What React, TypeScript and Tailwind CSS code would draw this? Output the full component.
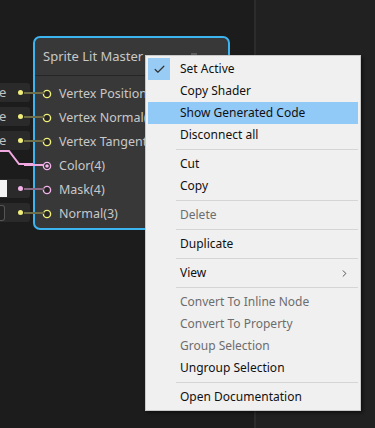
import { Check, ChevronRight } from "lucide-react";

type Item = { label: string; disabled?: boolean; checked?: boolean; active?: boolean; sub?: boolean } | "sep";

const menu: Item[] = [
  { label: "Set Active", checked: true },
  { label: "Copy Shader" },
  { label: "Show Generated Code", active: true },
  { label: "Disconnect all" },
  "sep",
  { label: "Cut" },
  { label: "Copy" },
  "sep",
  { label: "Delete", disabled: true },
  "sep",
  { label: "Duplicate" },
  "sep",
  { label: "View", sub: true },
  "sep",
  { label: "Convert To Inline Node", disabled: true },
  { label: "Convert To Property", disabled: true },
  { label: "Group Selection", disabled: true },
  { label: "Ungroup Selection" },
  "sep",
  { label: "Open Documentation" },
];

const slots = [
  { label: "Vertex Position", kind: "vec" },
  { label: "Vertex Normal(3)", kind: "vec" },
  { label: "Vertex Tangent(3)", kind: "vec" },
  { label: "Color(4)", kind: "color" },
  { label: "Mask(4)", kind: "mask" },
  { label: "Normal(3)", kind: "vec" },
];

function Port({ kind }: { kind: string }) {
  const c = kind === "vec" ? "#f2f07c" : "#f4b4ea";
  return (
    <svg width="10" height="10" viewBox="0 0 10 10" className="shrink-0">
      <circle cx="5" cy="5" r="3.6" fill="#262626" stroke={c} strokeWidth="1.4" />
      {kind === "color" && <circle cx="5" cy="5" r="1.8" fill={c} />}
    </svg>
  );
}

function Inputs() {
  // the input boxes that feed the master node, cut off by the left edge
  return (
    <div className="absolute left-0 top-[83px] w-[44px]">
      {slots.map((s, i) => {
        const dot = s.kind === "mask" ? "#f4b4ea" : "#f2f07c";
        const wire = s.kind === "color" || s.kind === "mask" ? "#8a6a84" : "#6f6d46";
        return (
          <div key={i} className="relative flex h-[24px] items-start">
            {s.kind !== "color" && (
              <div className="flex h-[19px] w-[30px] items-center rounded-r-[3px] bg-[#2a2a2a]">
                {s.kind === "vec" && i < 3 && (
                  <span className="ml-[-1px] text-[13px] leading-none text-[#c2c2c2]">e</span>
                )}
                {s.kind === "mask" && <div className="ml-0 h-[17px] w-[7px] bg-[#f4f4f4]" />}
                {i === 5 && <div className="h-[16px] w-[5px] rounded-r-[3px] border border-l-0 border-[#555] bg-[#222]" />}
              </div>
            )}
            {s.kind !== "color" && (
              <span className="absolute left-[18px] top-[7px] h-[5px] w-[5px] rounded-full" style={{ background: dot }} />
            )}
            <span className="absolute left-[24px] top-[8.5px] h-[2px] w-[20px]" style={{ background: s.kind === "color" ? "#f0a8e0" : wire }} />
          </div>
        );
      })}
    </div>
  );
}

export default function App() {
  return (
    <div className="relative h-[428px] w-[375px] overflow-hidden bg-[#1c1c1c] font-['Noto_Sans',sans-serif]">
      <div className="absolute inset-y-0 left-[254px] right-0 border-l-2 border-[#2c2c2c] bg-[#212121]" />

      {/* pink wire into Color(4) */}
      <svg className="absolute left-0 top-[145px]" width="46" height="30">
        <path d="M0 6 H9 L19 19 H44" fill="none" stroke="#f0a8e0" strokeWidth="2" />
      </svg>

      <div className="absolute left-[33px] top-[36px] h-[194px] w-[197px] rounded-[7px] border-2 border-[#3cb4ef] bg-[#383838]">
        <div className="flex h-[38px] items-center justify-between border-b border-[#262626] px-[8px]">
          <span className="text-[13px] text-[#c8c8c8]">Sprite Lit Master</span>
          <span className="mr-[23px] mt-[-2px] h-[5px] w-[6px] bg-[#5c5c5c]" />
        </div>
        <div className="flex flex-col pt-[6px]">
          {slots.map((s) => (
            <div key={s.label} className="flex h-[24px] items-center gap-[7px] pl-[7px]">
              <Port kind={s.kind} />
              <span className="whitespace-nowrap text-[12.5px] text-[#c8c8c8]">{s.label}</span>
            </div>
          ))}
        </div>
      </div>

      <Inputs />

      <div className="absolute left-[145px] top-[55px] w-[216px] border border-[#c9c9c9] bg-[#f0f0f0] py-[2px] shadow-[2px_2px_3px_rgba(0,0,0,0.45)]">
        {menu.map((m, i) =>
          m === "sep" ? (
            <div key={i} className="ml-[30px] mr-[2px] py-[3px]">
              <div className="h-px bg-[#d5d5d5]" />
            </div>
          ) : (
            <div
              key={i}
              className={`mx-[2px] flex h-[22px] items-center text-[12px] ${m.active ? "bg-[#91c9f7]" : ""} ${m.disabled ? "text-[#6d6d6d]" : "text-[#111]"}`}
            >
              <div className={`flex h-[22px] w-[22px] items-center justify-center ${m.checked ? "bg-[#99ccf5]" : ""}`}>
                {m.checked && <Check size={13} strokeWidth={2.2} className="text-[#333]" />}
              </div>
              <span className="ml-[10px] flex-1">{m.label}</span>
              {m.sub && <ChevronRight size={11} strokeWidth={1.8} className="mr-[8px] text-[#333]" />}
            </div>
          )
        )}
      </div>
    </div>
  );
}
